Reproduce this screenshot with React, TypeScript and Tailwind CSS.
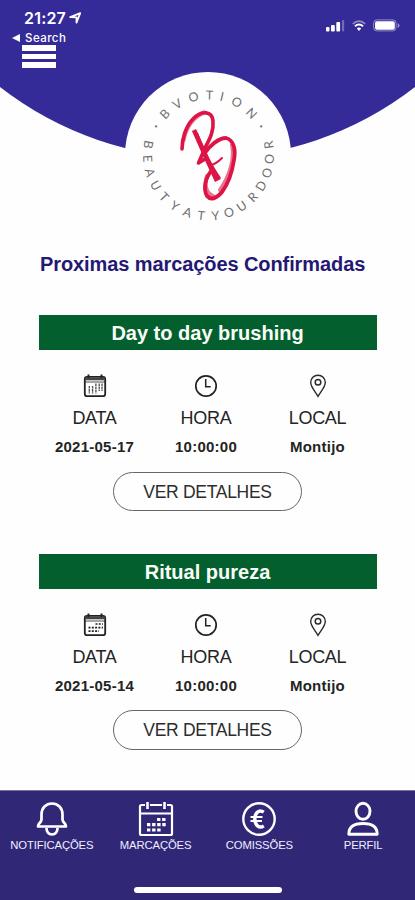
import React from "react";

const sans = "font-['Liberation_Sans',Arial,sans-serif]";

const topLetters: [string, number][] = [
  ["•", -61.5], ["B", -46.8], ["V", -31.5], ["O", -14.5], ["T", 1], ["I", 13], ["O", 28], ["N", 46], ["•", 61.5],
];
const bottomLetters = "BEAUTYATYOURDOOR".split("");

function Logo() {
  return (
    <svg viewBox="0 0 166 166" className="block h-[166px] w-[166px]">
      <circle cx="83" cy="83" r="83" fill="#fefefe" />
      <g fill="#707070" fontFamily="Lato, sans-serif" fontSize="12.5" textAnchor="middle">
        {topLetters.map(([c, a], i) => (
          <text key={i} x="83.5" y={c === "•" ? 25 : 27.5} fontSize={c === "•" ? 6 : 12.5} transform={`rotate(${a} 83.5 83)`}>{c}</text>
        ))}
        {bottomLetters.map((c, i) => (
          <text key={i} x="83.5" y="148.5" transform={`rotate(${100 - i * 13.3} 83.5 83)`}>{c}</text>
        ))}
      </g>
      <g fill="none" stroke="#dc1546" strokeLinecap="round" strokeLinejoin="round">
        <path d="M57 77C57 67 61 54 68 47C77 38 87 39 88 49C89 60 84 68 80 76" strokeWidth="3.6" />
        <path d="M58.5 68C60 57 68 44 79 40.5" strokeWidth="4.5" opacity=".55" />
        <path d="M69 58C75 72 83 90 92 109" strokeWidth="4.5" strokeLinecap="butt" />
        <path d="M71.5 62C78 78 86 95 94 106" strokeWidth="3.6" />
        <path d="M80 76L73.5 91L80 87" strokeWidth="3.6" />
        <path d="M79 82C85 73 94 66 101 66C109 68 111 78 109 88C107 101 103 112 97 120C92 126 86 129 82 124C78 117 80 106 87 98" strokeWidth="3.8" />
        <path d="M107 73C110 86 105 104 95 118M82 104C79 113 81 121 88 124" strokeWidth="4" opacity=".6" />
        <path d="M86 93Q91 92 97 86" strokeWidth="2" />
      </g>
    </svg>
  );
}

function StatusBar() {
  return (
    <div className="absolute inset-x-0 top-0 h-[72px] text-white">
      <div className="flex h-9 items-start justify-between pl-6 pr-[15px]">
        <div className="flex items-center gap-[3px] pt-2">
          <span className="font-['Inter',sans-serif] text-[16px] font-semibold leading-5 tracking-[0.2px]">21:27</span>
          <svg width="13" height="12" viewBox="0 0 13 12" fill="none" stroke="currentColor" strokeWidth="1.8" strokeLinejoin="round"><path d="M1.2 5.2L11.2 1.2L7.5 10.6V5.3Z" /></svg>
        </div>
        <div className="flex items-center gap-[7px] pt-[19px]">
          <svg width="19" height="13" viewBox="0 0 19 13" fill="currentColor"><rect y="8" width="3.5" height="4.5" rx="1" /><rect x="5" y="6" width="3.8" height="6.5" rx="1" /><rect x="10.3" y="3" width="3.8" height="9.5" rx="1" /><rect x="16" y="1" width="2.2" height="11.5" rx="1" opacity=".3" /></svg>
          <svg width="14" height="12" viewBox="0 0 14 12" fill="none" stroke="currentColor"><path d="M.8 4C4.3.2 9.7.2 13.2 4" strokeWidth="1.6" opacity=".45" /><path d="M3 6.4C5.3 4 8.7 4 11 6.4" strokeWidth="2" /><path d="M4.8 8.5C6.2 7.3 7.8 7.3 9.2 8.5L7 11Z" fill="currentColor" stroke="none" /></svg>
          <svg width="27" height="13" viewBox="0 0 27 13"><rect x=".6" y=".9" width="22.5" height="11" rx="3.2" fill="none" stroke="#fff" opacity=".45" /><rect x="2" y="2.2" width="19.8" height="8.6" rx="1.8" fill="#fff" /><path d="M24.7 4V9Q26.5 8 26.5 6.5T24.7 4Z" fill="#fff" opacity=".5" /></svg>
        </div>
      </div>
      <div className="-mt-[5px] flex h-[14px] items-center gap-[5px] pl-3">
        <svg width="8" height="8" viewBox="0 0 8 8" fill="currentColor"><path d="M8 0V8L0 4Z" /></svg>
        <span className="font-['Inter',sans-serif] text-[11.5px] font-medium leading-[14px] tracking-[0.45px]">Search</span>
      </div>
      <button aria-label="Menu" className="ml-[22px] flex w-[34px] flex-col gap-[3px]">
        <span className="h-[5.5px] bg-white" />
        <span className="h-[5.5px] bg-white" />
        <span className="h-[5.5px] bg-white" />
      </button>
    </div>
  );
}

function CardCalendar({ tall }: { tall: boolean }) {
  return (
    <svg width="24" height="24" viewBox="0 0 24 24" fill="none" stroke="#222">
      <rect x="1.8" y="2.8" width="20.4" height="19.4" rx="2.2" strokeWidth="1.8" />
      <path d="M2 5H22" strokeWidth="2.6" stroke="#444" /><path d="M2 8H22" strokeWidth=".8" />
      <path d="M5.5 .5V4M18.5 .5V4" strokeWidth="2" />
      {tall ? (
        <path d="M6.3 12V19.5M9.6 12V19.5M12.9 9.5V19.5M16.2 9.5V17M19 9.5V17" strokeWidth="1.3" strokeDasharray="2.6 .5" opacity=".8" />
      ) : (
        <path d="M12.5 11H20M5.5 14.7H20M5.5 18.2H16" strokeWidth="1.7" strokeDasharray="2 1.3" />
      )}
    </svg>
  );
}

function Clock() {
  return (
    <svg width="24" height="24" viewBox="0 0 24 24" fill="none" stroke="#222">
      <circle cx="12" cy="12" r="10.2" strokeWidth="1.7" /><path d="M11.7 5V12.7H16.7" strokeWidth="1.5" />
    </svg>
  );
}

function Pin() {
  return (
    <svg width="24" height="24" viewBox="0 0 24 24" fill="none" stroke="#2a2a2a">
      <path d="M12 22.3C9.2 17.5 4.7 12.9 4.7 8.5A7.3 7.3 0 0 1 19.3 8.5C19.3 12.9 14.8 17.5 12 22.3Z" strokeWidth="1.4" />
      <circle cx="12" cy="8.3" r="2.8" strokeWidth="1.5" />
    </svg>
  );
}

function Info({ icon, label, value }: { icon: React.ReactNode; label: string; value: string }) {
  return (
    <div className="flex w-[111.5px] flex-col items-center">
      {icon}
      <span className="mt-2 text-[18px] leading-6 tracking-[-0.3px] text-[#242424]">{label}</span>
      <span className="mt-[7px] text-[15px] font-bold leading-5 tracking-[0.25px] text-[#242424]">{value}</span>
    </div>
  );
}

function Booking({ title, date, tall = false }: { title: string; date: string; tall?: boolean }) {
  return (
    <section className="flex h-[238.5px] flex-col items-center">
      <h2 className="h-[35px] w-[338px] bg-[#045f2e] text-center text-[20px] font-bold leading-[36px] text-[#fafdf8]">{title}</h2>
      <div className="mr-[3px] mt-6 flex w-[335px] justify-center">
        <Info icon={<CardCalendar tall={tall} />} label="DATA" value={date} />
        <Info icon={<Clock />} label="HORA" value="10:00:00" />
        <Info icon={<Pin />} label="LOCAL" value="Montijo" />
      </div>
      <button className="mt-[14.5px] h-[39.5px] w-[189px] rounded-full border border-[#666] pt-px text-[17.5px] tracking-[-0.3px] text-[#2c2c2c]">VER DETALHES</button>
    </section>
  );
}

const icon = "h-[36px] w-[36px]";

function Tab({ label, children }: { label: string; children: React.ReactNode }) {
  return (
    <div className="flex w-1/4 flex-col items-center">
      {children}
      <span className="whitespace-nowrap text-[11.3px] leading-4 tracking-[-0.14px] text-[#f0edff]">{label}</span>
    </div>
  );
}

export default function App() {
  return (
    <main className={`relative flex h-[900px] w-[415px] flex-col overflow-hidden bg-[#fefefe] ${sans}`}>
      <header className="relative h-[238px] shrink-0">
        <svg className="absolute inset-0" width="415" height="160" viewBox="0 0 415 160"><path d="M0 0H415V87A338 338 0 0 1 0 87Z" fill="#352b98" /></svg>
        <div className="absolute left-[125px] top-[72px]"><Logo /></div>
        <StatusBar />
      </header>
      <h1 className="ml-10 mt-[13px] h-[26px] whitespace-nowrap text-[20px] font-bold leading-[26px] tracking-[-0.09px] text-[#251873]">Proximas marcações Confirmadas</h1>
      <div className="mt-[38px] h-[475px]">
        <Booking title="Day to day brushing" date="2021-05-17" tall />
        <Booking title="Ritual pureza" date="2021-05-14" />
      </div>
      <footer className="flex h-[110px] shrink-0 flex-col items-center border-t border-[#77719f] bg-[#302877]">
        <nav className="flex w-full pt-[10px]">
          <Tab label="NOTIFICAÇÕES">
            <svg className={icon} viewBox="0 0 36 36" fill="none" stroke="#fff" strokeWidth="2.7"><path d="M7.5 18.5V13.5C7.5 6.7 12 2.5 18 2.5S28.5 6.7 28.5 13.5V18.5C28.5 21.5 32 22 32 25.5H4C4 22 7.5 21.5 7.5 18.5Z" strokeLinejoin="round" /><path d="M12.5 27C12.5 30.5 14.5 33.5 18 33.5S23.5 30.5 23.5 27" /></svg>
          </Tab>
          <Tab label="MARCAÇÕES">
            <svg className={icon} viewBox="0 0 36 36" fill="none" stroke="#fff" strokeWidth="2.2"><path d="M7 4H3.5Q2 4 2 5.5V32.5Q2 34 3.5 34H32.5Q34 34 34 32.5V5.5Q34 4 32.5 4H29M12 4H24M2 12.5H34" /><path d="M9.5 1V8M26.5 1V8" strokeWidth="2.6" /><path d="M19 18.5H28M9 23.7H28M9 29H23" strokeWidth="3.2" strokeDasharray="3.4 1.7" /></svg>
          </Tab>
          <Tab label="COMISSÕES">
            <svg className={icon} viewBox="0 0 36 36" fill="none" stroke="#fff" strokeWidth="2.4"><circle cx="18" cy="18" r="15.7" /><path d="M22.8 11.2C18 8 13.8 12 13.8 18S18 28 22.8 24.8" strokeWidth="3.4" /><path d="M9.5 16H21.5M9.5 20H21" strokeWidth="2" /></svg>
          </Tab>
          <Tab label="PERFIL">
            <svg className={icon} viewBox="0 0 36 36" fill="none" stroke="#fff" strokeWidth="2.9" strokeLinejoin="round"><ellipse cx="18" cy="10.3" rx="7" ry="8" /><path d="M3.8 33.2C3.8 25.5 9 22.5 18 22.5S32.2 25.5 32.2 33.2Z" /></svg>
          </Tab>
        </nav>
        <div className="mt-[34px] h-[6px] w-[148px] rounded-full bg-white" />
      </footer>
    </main>
  );
}
